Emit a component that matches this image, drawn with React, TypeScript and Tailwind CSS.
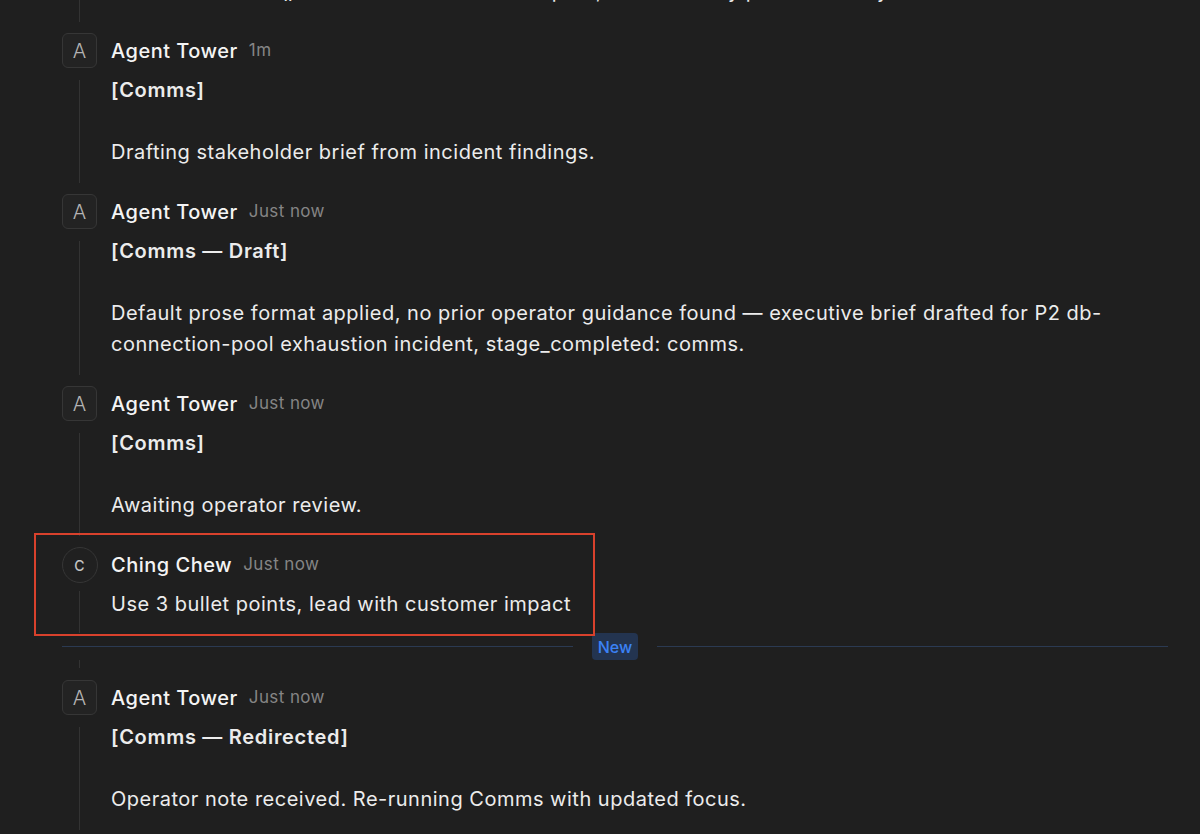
import React from "react";

type Msg = {
  author: string;
  time: string;
  kind: "agent" | "user";
  title?: string;
  body: string;
};

const messages: Msg[] = [
  { author: "Agent Tower", time: "1m", kind: "agent", title: "[Comms]", body: "Drafting stakeholder brief from incident findings." },
  {
    author: "Agent Tower",
    time: "Just now",
    kind: "agent",
    title: "[Comms — Draft]",
    body: "Default prose format applied, no prior operator guidance found — executive brief drafted for P2 db-connection-pool exhaustion incident, stage_completed: comms.",
  },
  { author: "Agent Tower", time: "Just now", kind: "agent", title: "[Comms]", body: "Awaiting operator review." },
];

const Avatar = ({ kind, letter }: { kind: "agent" | "user"; letter: string }) =>
  kind === "agent" ? (
    <div className="w-[35px] h-[35px] shrink-0 rounded-[6px] border border-[#363636] bg-[#232323] flex items-center justify-center text-[20px] font-light text-[#b4b4b4]">
      {letter}
    </div>
  ) : (
    <div className="w-[36px] h-[36px] shrink-0 rounded-full border border-[#363636] bg-[#202020] flex items-center justify-center text-[14px] font-medium text-[#c4c4c4]">
      {letter}
    </div>
  );

const Header = ({ author, time }: { author: string; time: string }) => (
  <div className="h-[35px] flex items-center gap-[11px]">
    <span className="text-[20px] font-medium text-[#f4f4f4] tracking-[0.5px]">{author}</span>
    <span className="text-[17px] text-[#858585] tracking-[0.4px]">{time}</span>
  </div>
);

const Message = ({ m, last }: { m: Msg; last?: boolean }) => (
  <div className="flex">
    <div className="w-[35px] flex flex-col items-center shrink-0">
      <Avatar kind={m.kind} letter={m.author[0]} />
      {!last && <div className="w-px flex-1 bg-[#333333] mt-3 mb-[11px]" />}
    </div>
    <div className="pl-[14px] pb-[26px] flex-1">
      <Header author={m.author} time={m.time} />
      <div className="mt-[7px] text-[20px] leading-[31px] tracking-[0.5px] text-[#ececec]">
        {m.title && <p className="font-semibold tracking-[0.7px]">{m.title}</p>}
        {m.title && <div className="h-[31px]" />}
        <p>{m.body}</p>
      </div>
    </div>
  </div>
);

export default function App() {
  return (
    <div className="min-h-screen h-[834px] overflow-hidden bg-[#1f1f1f] pl-[62px] pr-[32px]" style={{ fontFamily: "Inter, 'Noto Sans', sans-serif" }}>
      {/* cut-off previous message */}
      <div className="flex -mt-[24px]">
        <div className="w-[35px] flex flex-col items-center shrink-0">
          <div className="w-px flex-1 bg-[#333333] mb-[11px]" />
        </div>
        <div className="pl-[14px] pb-[26px] flex-1 text-[20px] leading-[31px] tracking-[0.5px] text-[#ececec]">
          connection.close() is not called on the error path, confirmed by pool telemetry.
        </div>
      </div>

      {messages.map((m, i) => (
        <Message key={i} m={m} />
      ))}

      {/* operator note */}
      <div className="relative flex">
        <div className="absolute -left-[28px] -top-[14px] w-[561px] h-[103px] border-2 border-[#d8412c] pointer-events-none" />
        <div className="w-[35px] flex flex-col items-center shrink-0">
          <Avatar kind="user" letter="C" />
          <div className="w-px flex-1 bg-[#333333] mt-[8px]" />
        </div>
        <div className="pl-[14px] pb-[13px] flex-1">
          <Header author="Ching Chew" time="Just now" />
          <p className="mt-[7px] text-[20px] leading-[31px] tracking-[0.5px] text-[#ececec]">Use 3 bullet points, lead with customer impact</p>
        </div>
      </div>

      <div className="h-[27px] flex items-center">
        <div className="flex-1 h-px bg-[#2b3a52]" />
        <span className="mx-[19px] px-[6px] h-[27px] rounded-[4px] bg-[#233450] text-[#3b82f6] text-[16px] font-medium flex items-center">New</span>
        <div className="flex-1 h-px bg-[#2b3a52]" />
      </div>
      <div className="h-[20px] pl-[17px]">
        <div className="w-px h-[8px] bg-[#333333]" />
      </div>

      <Message
        m={{ author: "Agent Tower", time: "Just now", kind: "agent", title: "[Comms — Redirected]", body: "Operator note received. Re-running Comms with updated focus." }}
      />
    </div>
  );
}
